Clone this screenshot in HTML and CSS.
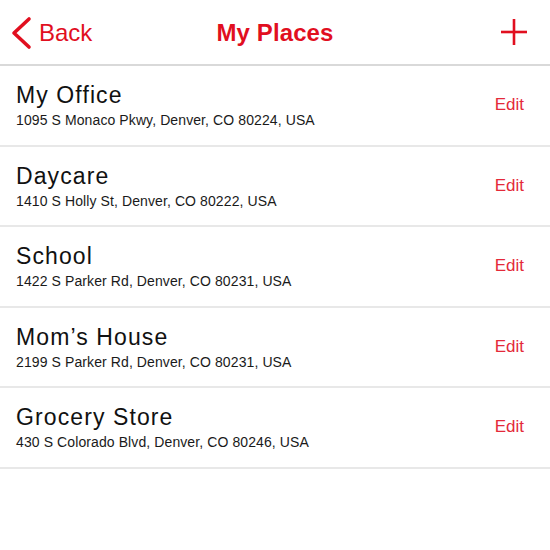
FILE: index.html
```html
<!DOCTYPE html>
<html lang="en">
<head>
<meta charset="utf-8">
<title>My Places</title>
<link rel="stylesheet" href="styles.css">
</head>
<body>
<div class="app">
  <header class="navbar">
    <a class="back" href="#">
      <svg class="chevron" width="22" height="34" viewBox="0 0 22 34" aria-hidden="true">
        <polyline points="19,3 4,17 19,31" fill="none" stroke="currentColor" stroke-width="3.6" stroke-linecap="round" stroke-linejoin="round"/>
      </svg>
      <span>Back</span>
    </a>
    <h1 class="title">My Places</h1>
    <a class="add" href="#" aria-label="Add">
      <svg width="26" height="26" viewBox="0 0 26 26" aria-hidden="true">
        <line x1="13" y1="0" x2="13" y2="26" stroke="currentColor" stroke-width="2.6"/>
        <line x1="0" y1="13" x2="26" y2="13" stroke="currentColor" stroke-width="2.6"/>
      </svg>
    </a>
  </header>
  <ul class="list">
    <li class="row">
      <div class="info">
        <div class="name">My Office</div>
        <div class="addr">1095 S Monaco Pkwy, Denver, CO 80224, USA</div>
      </div>
      <a class="edit" href="#">Edit</a>
    </li>
    <li class="row">
      <div class="info">
        <div class="name">Daycare</div>
        <div class="addr">1410 S Holly St, Denver, CO 80222, USA</div>
      </div>
      <a class="edit" href="#">Edit</a>
    </li>
    <li class="row">
      <div class="info">
        <div class="name">School</div>
        <div class="addr">1422 S Parker Rd, Denver, CO 80231, USA</div>
      </div>
      <a class="edit" href="#">Edit</a>
    </li>
    <li class="row">
      <div class="info">
        <div class="name">Mom’s House</div>
        <div class="addr">2199 S Parker Rd, Denver, CO 80231, USA</div>
      </div>
      <a class="edit" href="#">Edit</a>
    </li>
    <li class="row">
      <div class="info">
        <div class="name">Grocery Store</div>
        <div class="addr">430 S Colorado Blvd, Denver, CO 80246, USA</div>
      </div>
      <a class="edit" href="#">Edit</a>
    </li>
  </ul>
</div>
</body>
</html>
```

FILE: styles.css
```css
* { box-sizing: border-box; }
html, body {
  margin: 0;
  padding: 0;
  background: #ffffff;
}
body {
  font-family: "Liberation Sans", Arial, sans-serif;
  color: #111111;
}
a { text-decoration: none; color: inherit; }

.app {
  width: 550px;
}

.navbar {
  height: 66px;
  display: grid;
  grid-template-columns: 1fr auto 1fr;
  align-items: center;
  padding: 0 0 0 0;
  border-bottom: 2px solid #d9d9d9;
  color: #e10f1f;
}

.back {
  display: flex;
  align-items: center;
  gap: 7px;
  justify-self: start;
  margin-left: 10px;
  margin-top: 1px;
  font-size: 24px;
  color: #e10f1f;
}
.chevron { display: block; }

.title {
  margin: 2px 0 0;
  font-size: 24px;
  font-weight: bold;
  color: #e10f1f;
  letter-spacing: 0.1px;
}

.add {
  justify-self: end;
  margin-right: 23px;
  display: flex;
  color: #e10f1f;
}
.add svg { display: block; }

.list {
  list-style: none;
  margin: 0;
  padding: 0;
}

.row {
  height: 80.5px;
  display: flex;
  align-items: center;
  justify-content: space-between;
  padding: 0 26px 0 16px;
  border-bottom: 2px solid #e8e8e8;
}

.info {
  display: flex;
  flex-direction: column;
  gap: 3px;
  padding-top: 1px;
}

.name {
  font-size: 23px;
  letter-spacing: 1.1px;
  line-height: 26px;
  color: #111111;
}

.addr {
  font-size: 14px;
  letter-spacing: 0.1px;
  line-height: 18px;
  color: #1a1a1a;
}

.edit {
  font-size: 17px;
  color: #e4293a;
}
```
